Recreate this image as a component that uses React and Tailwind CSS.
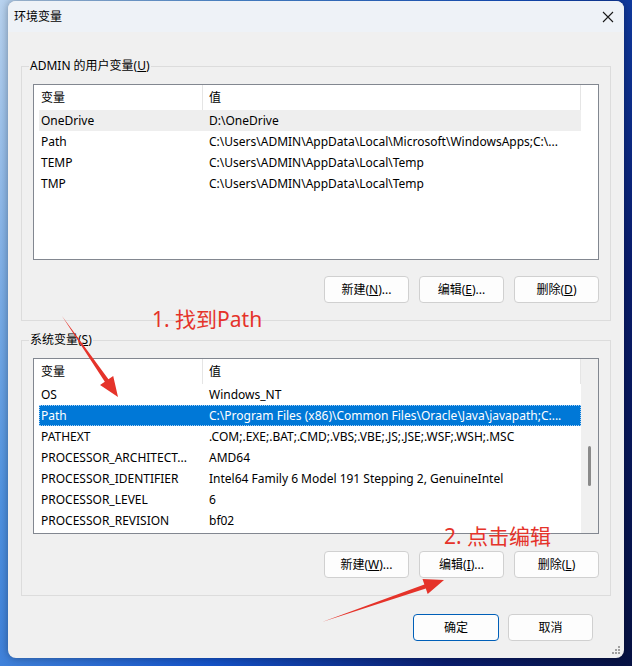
import React from 'react';

const userVars = [
  ['OneDrive', 'D:\\OneDrive'],
  ['Path', 'C:\\Users\\ADMIN\\AppData\\Local\\Microsoft\\WindowsApps;C:\\...'],
  ['TEMP', 'C:\\Users\\ADMIN\\AppData\\Local\\Temp'],
  ['TMP', 'C:\\Users\\ADMIN\\AppData\\Local\\Temp'],
];

const sysVars = [
  ['OS', 'Windows_NT'],
  ['Path', 'C:\\Program Files (x86)\\Common Files\\Oracle\\Java\\javapath;C:...'],
  ['PATHEXT', '.COM;.EXE;.BAT;.CMD;.VBS;.VBE;.JS;.JSE;.WSF;.WSH;.MSC'],
  ['PROCESSOR_ARCHITECT...', 'AMD64'],
  ['PROCESSOR_IDENTIFIER', 'Intel64 Family 6 Model 191 Stepping 2, GenuineIntel'],
  ['PROCESSOR_LEVEL', '6'],
  ['PROCESSOR_REVISION', 'bf02'],
];

// tapered arrow polygon from tail to tip
function arrowPoints(x1, y1, x2, y2) {
  const dx = x2 - x1;
  const dy = y2 - y1;
  const len = Math.hypot(dx, dy);
  const ux = dx / len;
  const uy = dy / len;
  const nx = -uy;
  const ny = ux;
  const headLen = 20;
  const headW = 8;
  const shaftW = 2.2;
  const bx = x2 - ux * headLen;
  const by = y2 - uy * headLen;
  const pts = [
    [x1, y1],
    [bx + nx * shaftW, by + ny * shaftW],
    [bx + nx * headW, by + ny * headW],
    [x2, y2],
    [bx - nx * headW, by - ny * headW],
    [bx - nx * shaftW, by - ny * shaftW],
  ];
  return pts.map((p) => p.join(',')).join(' ');
}

function Btn({ children, primary }) {
  return (
    <button
      className={
        primary
          ? 'w-[86px] h-[27px] rounded-[4px] border border-[#005fb8] bg-[#fdfdfd] text-[12px] text-black'
          : 'w-[85px] h-[27px] rounded-[4px] border border-[#d0d0d0] bg-[#fdfdfd] text-[12px] text-black'
      }
    >
      {children}
    </button>
  );
}

function ListView({ rows, selected, hover, scroll }) {
  return (
    <div className="h-[176px] border border-[#828790] bg-white flex">
      <div className="w-[547px] flex flex-col">
        <div className="h-[25px] flex text-[12px]">
          <div className="w-[169px] pl-[7px] flex items-center border-r border-[#e5e5e5]">变量</div>
          <div className="flex-1 pl-[6px] flex items-center border-r border-[#e5e5e5]">值</div>
        </div>
        {rows.map(([k, v], i) => (
          <div
            key={k}
            className={
              i === selected
                ? 'h-[21px] ml-[5px] flex items-center bg-[#0078d7] text-white outline-1 outline-dotted outline-[#a8d0f5] -outline-offset-1'
                : i === hover
                  ? 'h-[21px] ml-[5px] flex items-center bg-[#eeeeee] text-black'
                  : 'h-[21px] ml-[5px] flex items-center text-black'
            }
          >
            <div className="w-[163px] pl-[2px] whitespace-nowrap overflow-hidden">{k}</div>
            <div className="flex-1 pl-[7px] whitespace-nowrap overflow-hidden">{v}</div>
          </div>
        ))}
      </div>
      <div className={scroll ? 'flex-1 bg-[#f0f0f0] flex justify-center' : 'flex-1 bg-white'}>
        {scroll && <div className="w-[3px] h-[40px] mt-[87px] rounded-full bg-[#8a8a8a]" />}
      </div>
    </div>
  );
}

function Group({ label, children }) {
  return (
    <div className="relative border border-[#dcdcdc] px-[11px] pt-[17px] pb-[17px]">
      <span className="absolute -top-[9px] left-[7px] px-px bg-[#f0f0f0] text-[12px] leading-[16px] text-black">
        {label}
      </span>
      {children}
    </div>
  );
}

export default function App() {
  return (
    <div className="relative w-[632px] h-[666px] overflow-hidden bg-[linear-gradient(115deg,#b9d3ef_0%,#4f92e0_25%,#1553c9_55%,#0a1d6e_80%,#071243_100%)] font-['Noto_Sans','Noto_Sans_CJK_SC',sans-serif] text-[12px] text-black">
      <div className="pt-px pl-2">
        <div className="w-[616px] h-[657px] rounded-lg bg-[#f0f0f0] overflow-hidden shadow-[0_0_8px_rgba(0,0,0,0.35)] relative">
          <div className="h-[31px] bg-[#eef2f7] flex items-center justify-between pl-[6px] pr-[10px]">
            <span className="text-[12px]">环境变量</span>
            <svg width="12" height="12" viewBox="0 0 12 12">
              <path d="M1 1 L11 11 M11 1 L1 11" stroke="#1a1a1a" strokeWidth="1.1" />
            </svg>
          </div>
          <div className="px-[13px] pt-[34px] flex flex-col">
            <Group
              label={
                <>
                  ADMIN 的用户变量(<u>U</u>)
                </>
              }
            >
              <ListView rows={userVars} selected={-1} hover={0} />
              <div className="mt-[16px] flex justify-end gap-[10px]">
                <Btn>新建(<u>N</u>)...</Btn>
                <Btn>编辑(<u>E</u>)...</Btn>
                <Btn>删除(<u>D</u>)</Btn>
              </div>
            </Group>
            <div className="mt-[19px]">
              <Group
                label={
                  <>
                    系统变量(<u>S</u>)
                  </>
                }
              >
                <ListView rows={sysVars} selected={1} hover={-1} scroll />
                <div className="mt-[17px] flex justify-end gap-[10px]">
                  <Btn>新建(<u>W</u>)...</Btn>
                  <Btn>编辑(<u>I</u>)...</Btn>
                  <Btn>删除(<u>L</u>)</Btn>
                </div>
              </Group>
            </div>
            <div className="mt-[18px] mr-[18px] flex justify-end gap-[9px]">
              <Btn primary>确定</Btn>
              <Btn>取消</Btn>
            </div>
          </div>
          <svg className="absolute right-[3px] bottom-[3px]" width="10" height="10" viewBox="0 0 10 10">
            <g fill="#a0a0a0">
              <rect x="7" y="1" width="2" height="2" />
              <rect x="4" y="4" width="2" height="2" />
              <rect x="7" y="4" width="2" height="2" />
              <rect x="1" y="7" width="2" height="2" />
              <rect x="4" y="7" width="2" height="2" />
              <rect x="7" y="7" width="2" height="2" />
            </g>
          </svg>
        </div>
      </div>

      <span className="absolute left-[152px] top-[306px] text-[21px] leading-[26px] text-[#e5332a]">1. 找到Path</span>
      <span className="absolute left-[444px] top-[523px] text-[21px] leading-[26px] text-[#e5332a]">2. 点击编辑</span>
      <svg className="absolute inset-0 pointer-events-none" width="632" height="666">
        <polygon points={arrowPoints(62, 316, 118, 397)} fill="#e5332a" />
        <polygon points={arrowPoints(322, 622, 444, 580)} fill="#e5332a" />
      </svg>
    </div>
  );
}
